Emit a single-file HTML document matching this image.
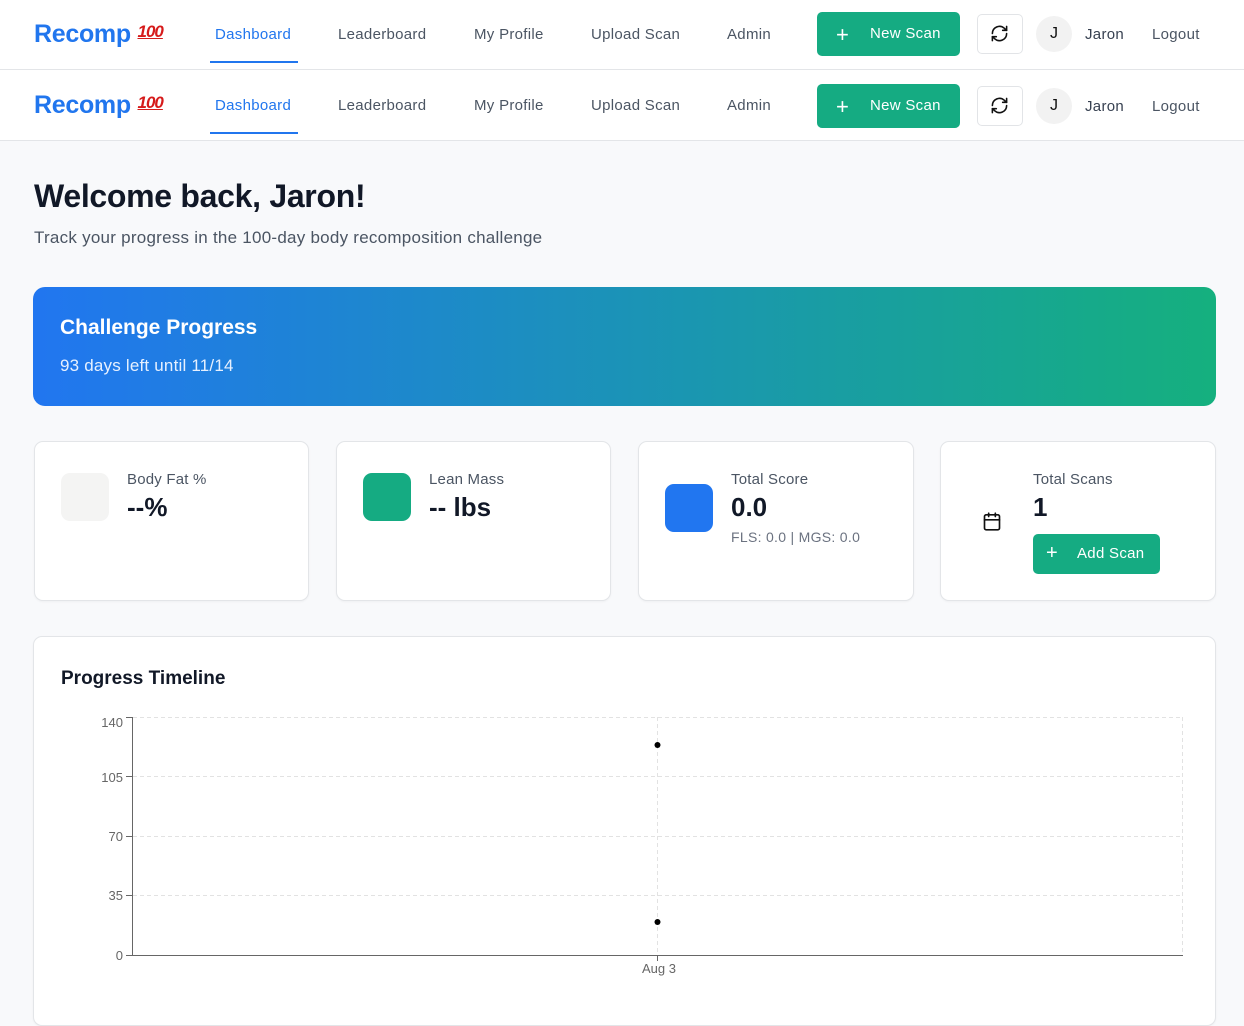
<!DOCTYPE html>
<html><head><meta charset="utf-8"><style>
*{box-sizing:border-box;margin:0;padding:0}
body{width:1244px;height:1012px;overflow:hidden;background:#f8f9fb;font-family:"Liberation Sans",Arial,sans-serif;position:relative;color:#111827}
.nav{position:absolute;left:0;width:1244px;height:71px;background:#fff;border-bottom:1px solid #e3e5e8}
.a{position:absolute;white-space:nowrap}
.logo{font-size:25px;font-weight:bold;color:#2176ee;letter-spacing:-0.3px}
.logo span{color:#d61b1b;font-style:italic;font-size:17px;text-decoration:underline;vertical-align:5px;letter-spacing:-1px}
.lk{font-size:15px;color:#4b5563;letter-spacing:0.3px}
.act{color:#2176ee}
.ul{height:2px;background:#2176ee;width:88px}
.btn{background:#15ab82;color:#fff;border-radius:5px;font-size:15px;letter-spacing:0.3px}
.rf{width:46px;height:40px;border:1px solid #e2e4e7;border-radius:5px;background:#fff}
.av{width:36px;height:36px;border-radius:50%;background:#f2f2f2;font-size:16px;text-align:center;line-height:36px;color:#111}
.card{position:absolute;background:#fff;border:1px solid #e3e5e8;border-radius:9px;box-shadow:0 1px 2px rgba(0,0,0,.04)}
.lbl{font-size:15px;color:#4b5563;letter-spacing:0.2px}
.val{font-size:26px;font-weight:bold;color:#111827}
</style></head><body>

<div class="nav" style="top:0;height:70px"></div>
<div class="nav" style="top:70px"></div>

<div class="a logo" style="left:34px;top:20px">Recomp <span>100</span></div>
<div class="a lk act" style="left:215px;top:26px">Dashboard</div>
<div class="a ul" style="left:210px;top:61px"></div>
<div class="a lk" style="left:338px;top:26px">Leaderboard</div>
<div class="a lk" style="left:474px;top:26px">My Profile</div>
<div class="a lk" style="left:591px;top:26px">Upload Scan</div>
<div class="a lk" style="left:727px;top:26px">Admin</div>
<div class="a btn" style="left:817px;top:12px;width:143px;height:44px;line-height:44px;padding-left:53px">New Scan</div>
<div class="a" style="left:836px;top:22px;color:#fff;font-size:22px;font-weight:300">+</div>
<div class="a rf" style="left:977px;top:14px"></div>
<div class="a" style="left:990px;top:24px"><svg width="19" height="19" viewBox="0 0 24 24" fill="none" stroke="#111" stroke-width="2" stroke-linecap="round" stroke-linejoin="round"><path d="M3 12a9 9 0 0 1 15-6.7L21 8"/><path d="M21 3v5h-5"/><path d="M21 12a9 9 0 0 1-15 6.7L3 16"/><path d="M8 16H3v5"/></svg></div>
<div class="a av" style="left:1036px;top:16px">J</div>
<div class="a lk" style="left:1085px;top:26px;color:#374151">Jaron</div>
<div class="a lk" style="left:1152px;top:26px">Logout</div>

<div class="a logo" style="left:34px;top:91px">Recomp <span>100</span></div>
<div class="a lk act" style="left:215px;top:97px">Dashboard</div>
<div class="a ul" style="left:210px;top:132px"></div>
<div class="a lk" style="left:338px;top:97px">Leaderboard</div>
<div class="a lk" style="left:474px;top:97px">My Profile</div>
<div class="a lk" style="left:591px;top:97px">Upload Scan</div>
<div class="a lk" style="left:727px;top:97px">Admin</div>
<div class="a btn" style="left:817px;top:84px;width:143px;height:44px;line-height:44px;padding-left:53px">New Scan</div>
<div class="a" style="left:836px;top:94px;color:#fff;font-size:22px;font-weight:300">+</div>
<div class="a rf" style="left:977px;top:86px"></div>
<div class="a" style="left:990px;top:96px"><svg width="19" height="19" viewBox="0 0 24 24" fill="none" stroke="#111" stroke-width="2" stroke-linecap="round" stroke-linejoin="round"><path d="M3 12a9 9 0 0 1 15-6.7L21 8"/><path d="M21 3v5h-5"/><path d="M21 12a9 9 0 0 1-15 6.7L3 16"/><path d="M8 16H3v5"/></svg></div>
<div class="a av" style="left:1036px;top:88px">J</div>
<div class="a lk" style="left:1085px;top:98px;color:#374151">Jaron</div>
<div class="a lk" style="left:1152px;top:98px">Logout</div>

<div class="a" style="left:34px;top:178px;font-size:32px;font-weight:bold;letter-spacing:-0.3px">Welcome back, Jaron!</div>
<div class="a" style="left:34px;top:228px;font-size:17px;color:#4b5563;letter-spacing:0.25px">Track your progress in the 100-day body recomposition challenge</div>

<div class="a" style="left:33px;top:287px;width:1183px;height:119px;border-radius:12px;background:linear-gradient(90deg,#2176f0,#15b07e)"></div>
<div class="a" style="left:60px;top:316px;font-size:21px;font-weight:bold;color:#fff">Challenge Progress</div>
<div class="a" style="left:60px;top:356px;font-size:17px;color:#e6f0ff;letter-spacing:0.2px">93 days left until 11/14</div>

<div class="card" style="left:34px;top:441px;width:275px;height:160px"></div>
<div class="a" style="left:61px;top:473px;width:48px;height:48px;border-radius:9px;background:#f4f4f3"></div>
<div class="a lbl" style="left:127px;top:471px">Body Fat %</div>
<div class="a val" style="left:127px;top:492px">--%</div>

<div class="card" style="left:336px;top:441px;width:275px;height:160px"></div>
<div class="a" style="left:363px;top:473px;width:48px;height:48px;border-radius:9px;background:#15ab82"></div>
<div class="a lbl" style="left:429px;top:471px">Lean Mass</div>
<div class="a val" style="left:429px;top:492px">-- lbs</div>

<div class="card" style="left:638px;top:441px;width:276px;height:160px"></div>
<div class="a" style="left:665px;top:484px;width:48px;height:48px;border-radius:9px;background:#2176f0"></div>
<div class="a lbl" style="left:731px;top:471px">Total Score</div>
<div class="a val" style="left:731px;top:492px">0.0</div>
<div class="a" style="left:731px;top:529px;font-size:14px;color:#6b7280;letter-spacing:0.3px">FLS: 0.0 | MGS: 0.0</div>

<div class="card" style="left:940px;top:441px;width:276px;height:160px"></div>
<div class="a" style="left:982px;top:511px"><svg width="20" height="21" viewBox="0 0 24 24" fill="none" stroke="#111" stroke-width="2" stroke-linecap="round" stroke-linejoin="round"><rect x="3" y="4" width="18" height="18" rx="2"/><path d="M16 2v4M8 2v4M3 10h18"/></svg></div>
<div class="a lbl" style="left:1033px;top:471px">Total Scans</div>
<div class="a val" style="left:1033px;top:492px">1</div>
<div class="a btn" style="left:1033px;top:534px;width:127px;height:40px;line-height:40px;padding-left:44px">Add Scan</div>
<div class="a" style="left:1046px;top:542px;color:#fff;font-size:20px;font-weight:300">+</div>

<div class="card" style="left:33px;top:636px;width:1183px;height:390px"></div>
<div class="a" style="left:61px;top:668px;font-size:19px;font-weight:bold">Progress Timeline</div>
<svg class="a" style="left:0;top:0" width="1244" height="1012">
<g stroke="#e2e2e2" stroke-dasharray="4 3" stroke-width="1">
<line x1="133" y1="717.5" x2="1183" y2="717.5"/>
<line x1="133" y1="776.5" x2="1183" y2="776.5"/>
<line x1="133" y1="836.5" x2="1183" y2="836.5"/>
<line x1="133" y1="895.5" x2="1183" y2="895.5"/>
<line x1="657.5" y1="717" x2="657.5" y2="955"/>
<line x1="1182.5" y1="717" x2="1182.5" y2="955"/>
</g>
<g stroke="#666" stroke-width="1">
<line x1="132.5" y1="717" x2="132.5" y2="955"/>
<line x1="132" y1="955.5" x2="1183" y2="955.5"/>
<line x1="126" y1="717.5" x2="132" y2="717.5"/>
<line x1="126" y1="776.5" x2="132" y2="776.5"/>
<line x1="126" y1="836.5" x2="132" y2="836.5"/>
<line x1="126" y1="895.5" x2="132" y2="895.5"/>
<line x1="126" y1="955.5" x2="132" y2="955.5"/>
<line x1="657.5" y1="955" x2="657.5" y2="961"/>
</g>
<circle cx="657.5" cy="745" r="3" fill="#000"/>
<circle cx="657.5" cy="922" r="3" fill="#000"/>
<g font-family="Liberation Sans,Arial,sans-serif" font-size="13" fill="#666" text-anchor="end">
<text x="123" y="727">140</text>
<text x="123" y="782">105</text>
<text x="123" y="841">70</text>
<text x="123" y="900">35</text>
<text x="123" y="960">0</text>
<text x="676" y="973">Aug 3</text>
</g>
</svg>
</body></html>
